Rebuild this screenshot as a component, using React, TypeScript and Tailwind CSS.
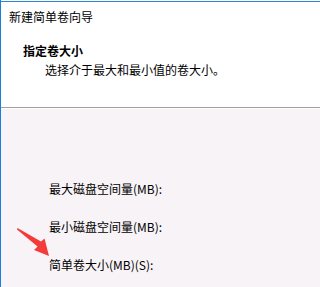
const font = "font-['Microsoft_YaHei_UI','Noto_Sans_CJK_SC',sans-serif]";

function Arrow() {
  return (
    <svg
      className="absolute left-0 top-0 pointer-events-none"
      width="238"
      height="287"
      viewBox="0 0 238 287"
    >
      <path d="M16.5 228 L40 241.5 L43.5 238.5 L48 256 L33 250 L36.5 246.5 L16 229.5 Z" fill="#f53a3a" />
    </svg>
  );
}

export default function App() {
  return (
    <div className={`relative w-full min-w-[238px] h-[287px] overflow-hidden bg-white border-l border-[#1a7fd6] text-[12px] leading-[16px] text-black ${font}`}>
      <div className="h-[1px] bg-white" />
      <div className="h-[1px] bg-[#2b86d8]" />
      <div className="h-[105px] bg-white pl-[8px] pt-[7px]">
        <div>新建简单卷向导</div>
        <div className="mt-[18px] pl-[14px] font-bold">指定卷大小</div>
        <div className="mt-[3px] pl-[36px]">选择介于最大和最小值的卷大小。</div>
      </div>
      <div className="h-[1px] bg-[#a0a0a0]" />
      <div className="h-[1px] bg-white" />
      <div className="h-[178px] bg-[#f7f3f7] pl-[48px] pt-[72px] flex flex-col gap-[22px]">
        <div>最大磁盘空间量(MB):</div>
        <div>最小磁盘空间量(MB):</div>
        <div>简单卷大小(MB)(S):</div>
      </div>
      <Arrow />
    </div>
  );
}
